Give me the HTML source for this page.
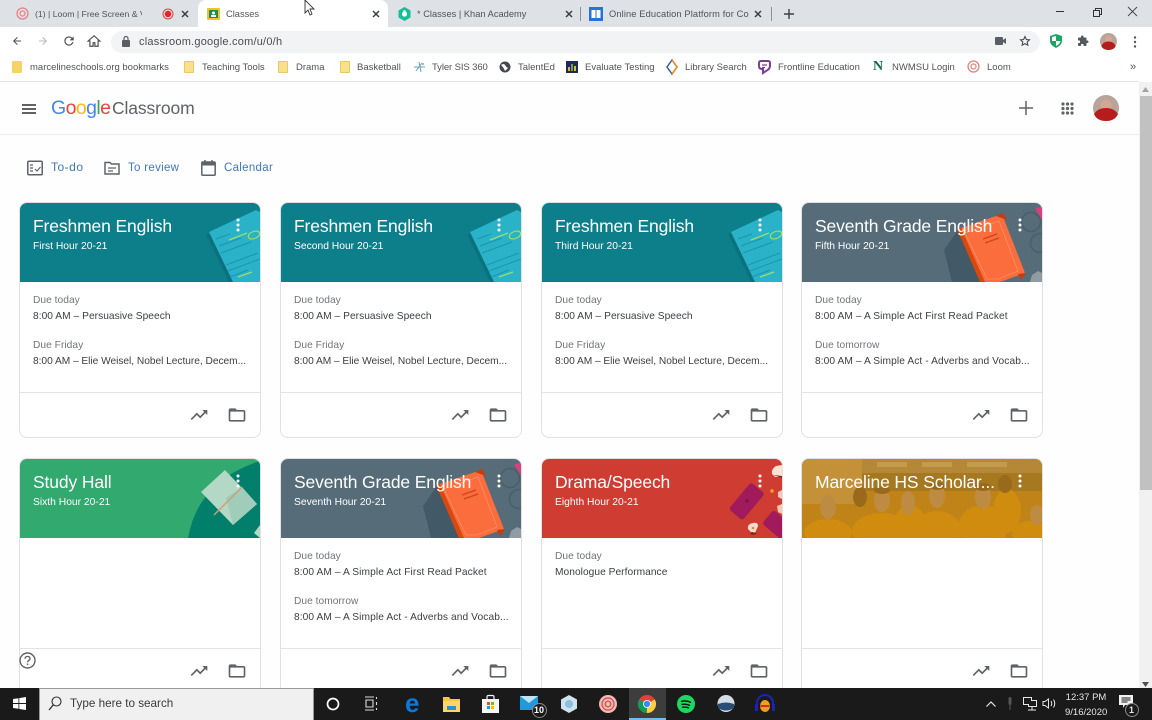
<!DOCTYPE html>
<html><head><meta charset="utf-8"><title>Classes</title>
<style>
*{box-sizing:border-box}
html,body{margin:0;padding:0;width:1152px;height:720px;overflow:hidden;background:#fefefe;font-family:"Liberation Sans",sans-serif}
.a{position:absolute;white-space:nowrap}
svg{position:absolute;overflow:visible}
.tabt{font-size:9.3px;color:#505357;top:8px;line-height:13px}
.bm{font-size:9.5px;color:#505357;top:61px;line-height:13px}
.card{position:absolute;width:242px;height:236px;border:1px solid #dfe1e5;border-radius:8px;background:#fff;overflow:hidden}
.hd{position:absolute;left:0;top:0;width:240px;height:79px;overflow:hidden}
.hd svg{left:0;top:0}
.t{position:absolute;left:13px;top:11px;font-size:17.5px;line-height:24px;color:#fff;white-space:nowrap;letter-spacing:-.13px}
.s{position:absolute;left:13px;top:37px;font-size:10.3px;line-height:14px;color:#fff;white-space:nowrap}
.l{position:absolute;left:13px;font-size:10.2px;line-height:14px;white-space:nowrap;color:#3c4043;letter-spacing:.04px}
.g{color:#70757a}
.k{letter-spacing:-.03px}
.v{letter-spacing:.09px}
.r{position:absolute;left:0;top:189px;width:240px;height:1px;background:#e3e3e3}
.lnk{position:absolute;top:161px;font-size:11.5px;line-height:15px;color:#3f78c4;white-space:nowrap;letter-spacing:.3px}
</style></head><body>

<svg width="0" height="0" style="position:absolute;left:0;top:0">
<defs>
<symbol id="trend" viewBox="0 0 24 24"><path d="M16 6l2.290 2.290-4.880 4.880-4-4L2 16.590 3.410 18l6-6 4 4 6.300-6.290L22 12V6z" fill="#5f6368"/></symbol>
<symbol id="folder" viewBox="0 0 24 24"><path d="M20 6h-8l-2-2H4c-1.100 0-2 .9-2 2v12c0 1.100.9 2 2 2h16c1.100 0 2-.9 2-2V8c0-1.100-.9-2-2-2zm0 12H4V8h16v10z" fill="#5f6368"/></symbol>
<symbol id="keb" viewBox="0 0 6 18"><circle cx="3" cy="4" r="1.500" fill="#fff"/><circle cx="3" cy="9" r="1.500" fill="#fff"/><circle cx="3" cy="14" r="1.500" fill="#fff"/></symbol>
<symbol id="teal" viewBox="0 0 240 79">
<rect width="240" height="79" fill="#0d7f8a"/>
<polygon points="186,31 192,30 218,79 209,79" fill="#0b727d"/>
<polygon points="189,29 236,7 240,9 240,79 213,79" fill="#2ab3c8"/>
<g stroke="#1a94ac" stroke-width="1" fill="none">
<path d="M196 36l14-5M199 43l22-8M201 50l30-11M206 62l32-12M208 68l32-12M210 74l18-7"/></g>
<path d="M209 37l18-7M218 74l14-5" stroke="#9ddc72" stroke-width="1.300" fill="none"/>
<ellipse cx="234" cy="32" rx="6" ry="3.500" fill="none" stroke="#9ddc72" stroke-width="1.200" transform="rotate(-22 234 32)"/>
</symbol>
<symbol id="gray" viewBox="0 0 240 79">
<rect width="240" height="79" fill="#566d79"/>
<circle cx="229" cy="19" r="9.500" fill="none" stroke="#47606c" stroke-width="1.500"/>
<circle cx="238" cy="40" r="9.500" fill="none" stroke="#47606c" stroke-width="1.500"/>
<polygon points="233,5 240,4 240,17" fill="#d8407e"/>
<polygon points="142,47 156,27 180,79 150,79" fill="#425a67"/>
<polygon points="230,72 236,68 240,70 240,79 228,79" fill="#8f9ca3"/>
<polygon points="155,26 160,24 184,79 178,79" fill="#d9480f"/>
<polygon points="159,25 200,11 223,70 198,79 183,79" fill="#fb6d3c"/>
<polygon points="163,30 197,18 216,68 196,76 185,76" fill="none" stroke="#fd9c78" stroke-width=".6"/>
<path d="M181 36l14-5M183 40l14-5" stroke="#c9461b" stroke-width="1.200"/>
<polygon points="194,13 201,10 205,17" fill="#c93a0e"/>
<polygon points="216,71 224,70 219,77" fill="#c93a0e"/>
</symbol>
<symbol id="green" viewBox="0 0 240 79">
<rect width="240" height="79" fill="#31a96f"/>
<path d="M168 79Q178 22 240 2V79Z" fill="#017f6a"/>
<polygon points="205,11 181,33 213,66 237,45" fill="#b4d8c6"/>
<polygon points="206,39 213,66 237,45 222,28" fill="#9fcdb9"/>
<path d="M222 28l-28 28" stroke="#d99a76" stroke-width="1.400"/>
<polygon points="240,66 234,74 240,79" fill="#b4d8c6"/>
</symbol>
<symbol id="red" viewBox="0 0 240 79">
<rect width="240" height="79" fill="#cf3c31"/>
<rect x="196" y="25" width="18" height="35" rx="3" fill="#a01a5c" transform="rotate(40 205 42)"/>
<circle cx="205" cy="42" r="1.800" fill="#7d1447"/>
<rect x="229" y="52" width="18" height="32" rx="3" fill="#a01a5c" transform="rotate(-50 238 68)"/>
<path d="M230 15q-1-5 4-8l6-1v12l-7 0z" fill="#fbe3d6"/>
<path d="M231 16l9 3v-2z" fill="#8a241d"/>
<path d="M206 70q-1-5 5-6 5-1 5 3l-3 7-4-1z" fill="#f9dccf"/><circle cx="211" cy="69" r="1.300" fill="#d98a3a"/>
<path d="M208 75q4 2 7-1l-5-1z" fill="#8a241d"/>
<circle cx="230" cy="32" r="1.700" fill="#f5a623"/>
<path d="M236 33l4-2v9l-4-2z" fill="#f7c9b8"/>
<path d="M235 47l5-2v10l-4-2z" fill="#f7c9b8"/>
</symbol>
<symbol id="photo" viewBox="0 0 240 79">
<rect width="240" height="79" fill="#bf8317"/>
<rect x="0" y="0" width="60" height="45" fill="#c49038"/>
<rect x="60" y="0" width="180" height="14" fill="#b48836"/>
<rect x="75" y="3" width="30" height="5" fill="#c49a4c"/><rect x="120" y="3" width="30" height="5" fill="#c49a4c"/><rect x="165" y="3" width="40" height="5" fill="#c49a4c"/>
<rect x="60" y="14" width="180" height="18" fill="#a67820"/>
<g fill="#d08c0e">
<ellipse cx="26" cy="74" rx="24" ry="14"/><ellipse cx="80" cy="72" rx="30" ry="18"/><ellipse cx="135" cy="72" rx="24" ry="20"/><ellipse cx="181" cy="68" rx="25" ry="22"/><ellipse cx="228" cy="74" rx="18" ry="12"/><ellipse cx="108" cy="66" rx="16" ry="20"/><ellipse cx="205" cy="52" rx="14" ry="22"/></g>
<g fill="#bd8c42">
<ellipse cx="26" cy="48" rx="8" ry="12"/><ellipse cx="80" cy="41" rx="8" ry="12"/><ellipse cx="106" cy="44" rx="7" ry="12"/><ellipse cx="135" cy="37" rx="8" ry="12"/><ellipse cx="181" cy="38" rx="8" ry="12"/><ellipse cx="235" cy="56" rx="7" ry="10"/></g>
<g fill="#9a6a1c">
<ellipse cx="58" cy="38" rx="7" ry="10"/><ellipse cx="203" cy="25" rx="7" ry="9"/><ellipse cx="80" cy="31" rx="8" ry="4"/><ellipse cx="135" cy="27" rx="8" ry="4"/><ellipse cx="181" cy="28" rx="8" ry="4"/></g>
</symbol>
</defs></svg>

<!-- tab strip -->
<div class="a" style="left:0;top:0;width:1152px;height:27px;background:#dee1e6"></div>
<div class="a" style="left:198px;top:0;width:190px;height:28px;background:#fff;border-radius:8px 8px 0 0"></div>
<svg style="left:16px;top:7px" width="13" height="13" viewBox="0 0 13 13"><circle cx="6.500" cy="6.500" r="5.500" fill="none" stroke="#e8837f" stroke-width="1.300"/><circle cx="6.500" cy="6.500" r="2.500" fill="none" stroke="#e8837f" stroke-width="1.200"/></svg>
<div class="a tabt" style="left:35px;width:107px;overflow:hidden;font-size:8.7px">(1) | Loom | Free Screen &amp; Vi</div>
<svg style="left:162px;top:8px" width="12" height="12" viewBox="0 0 12 12"><circle cx="6" cy="6" r="5" fill="none" stroke="#e0433a" stroke-width="1"/><circle cx="6" cy="6" r="3.200" fill="#e0262a"/></svg>
<svg style="left:181px;top:10px" width="8" height="8" viewBox="0 0 8 8"><path d="M1 1l6 6M7 1L1 7" stroke="#3c4043" stroke-width="1.500"/></svg>
<svg style="left:207px;top:8px" width="13" height="12" viewBox="0 0 13 12"><rect width="13" height="12" rx="1" fill="#f5c02e"/><rect x="2" y="2" width="9" height="8" fill="#1f8e4c"/><circle cx="6.500" cy="5" r="1.500" fill="#fff"/><rect x="4" y="7" width="5" height="2" fill="#fff"/></svg>
<div class="a tabt" style="left:226px">Classes</div>
<svg style="left:372px;top:10px" width="8" height="8" viewBox="0 0 8 8"><path d="M1 1l6 6M7 1L1 7" stroke="#3c4043" stroke-width="1.500"/></svg>
<svg style="left:398px;top:7px" width="13" height="14" viewBox="0 0 13 14"><polygon points="6.500,0 12.500,3.500 12.500,10.500 6.500,14 .5,10.500 .5,3.500" fill="#14bf96"/><circle cx="6.500" cy="7" r="2.600" fill="#fff"/><circle cx="6.500" cy="4.300" r="1.200" fill="#fff"/></svg>
<div class="a tabt" style="left:417px">* Classes | Khan Academy</div>
<svg style="left:565px;top:10px" width="8" height="8" viewBox="0 0 8 8"><path d="M1 1l6 6M7 1L1 7" stroke="#3c4043" stroke-width="1.500"/></svg>
<div class="a" style="left:580px;top:7px;width:1px;height:14px;background:#8f9296"></div>
<svg style="left:589px;top:7px" width="14" height="14" viewBox="0 0 14 14"><rect width="14" height="14" fill="#1f78d8"/><rect x="2.500" y="3" width="4" height="8" fill="#fff"/><rect x="7.500" y="3" width="4" height="8" fill="#fff"/></svg>
<div class="a tabt" style="left:609px;width:141px;overflow:hidden;letter-spacing:.12px">Online Education Platform for Co</div>
<svg style="left:754px;top:10px" width="8" height="8" viewBox="0 0 8 8"><path d="M1 1l6 6M7 1L1 7" stroke="#3c4043" stroke-width="1.500"/></svg>
<div class="a" style="left:771px;top:7px;width:1px;height:14px;background:#8f9296"></div>
<svg style="left:784px;top:9px" width="10" height="10" viewBox="0 0 10 10"><path d="M5 0v10M0 5h10" stroke="#3c4043" stroke-width="1.400"/></svg>
<div class="a" style="left:1056px;top:11px;width:8px;height:1px;background:#333"></div>
<svg style="left:1093px;top:8px" width="9" height="9" viewBox="0 0 9 9"><path d="M.5 2.500h6v6h-6zM2.500 2.500v-2h6v6h-2" fill="none" stroke="#333"/></svg>
<svg style="left:1128px;top:7px" width="9" height="9" viewBox="0 0 9 9"><path d="M0 0l9 9M9 0L0 9" stroke="#444" stroke-width=".9"/></svg>
<!-- cursor -->
<svg style="left:304px;top:0;z-index:5" width="11" height="17" viewBox="0 0 11 17"><path d="M1 0v13l3-3 2 5 2-1-2-5h4z" fill="#fff" stroke="#333" stroke-width=".9"/></svg>

<!-- toolbar -->
<div class="a" style="left:0;top:27px;width:1152px;height:54px;background:#fff"></div>
<div class="a" style="left:111px;top:31px;width:929px;height:22px;border-radius:11px;background:#f1f3f4"></div>
<svg style="left:11px;top:35px" width="12" height="12" viewBox="0 0 24 24"><path d="M20 11H7.830l5.590-5.590L12 4l-8 8 8 8 1.410-1.410L7.830 13H20v-2z" fill="#4a4d51"/></svg>
<svg style="left:37px;top:35px" width="12" height="12" viewBox="0 0 24 24"><path d="M4 11h12.170l-5.590-5.590L12 4l8 8-8 8-1.410-1.410L16.170 13H4v-2z" fill="#b4b7bb"/></svg>
<svg style="left:62px;top:34px" width="14" height="14" viewBox="0 0 24 24"><path d="M17.650 6.350A7.960 7.960 0 0 0 12 4a8 8 0 1 0 7.730 10h-2.080A6 6 0 1 1 12 6c1.660 0 3.140.69 4.220 1.780L13 11h7V4l-2.350 2.350z" fill="#4a4d51"/></svg>
<svg style="left:87px;top:34px" width="14" height="14" viewBox="0 0 24 24"><path d="M12 3L2 12h3v9h5.500v-6h3v6H19v-9h3z" fill="none" stroke="#4a4d51" stroke-width="2"/></svg>
<svg style="left:122px;top:36px" width="8" height="11" viewBox="0 0 8 11"><rect y="4" width="8" height="7" rx="1" fill="#5a5d61"/><path d="M2 4V2.500a2 2 0 0 1 4 0V4" fill="none" stroke="#5a5d61" stroke-width="1.200"/></svg>
<div class="a" style="left:139px;top:35px;font-size:11px;line-height:15px;color:#4a4d51;letter-spacing:.22px">classroom.google.com/u/0/h</div>
<svg style="left:995px;top:37px" width="11" height="8" viewBox="0 0 11 8"><rect width="8" height="8" rx="1" fill="#5a5d61"/><path d="M8 3l3-2v6L8 5z" fill="#5a5d61"/></svg>
<svg style="left:1019px;top:35px" width="12" height="12" viewBox="0 0 24 24"><path d="M12 3l2.800 6 6.200.7-4.600 4.300 1.300 6.400L12 17.200l-5.700 3.200 1.300-6.400L3 9.700 9.200 9z" fill="none" stroke="#4a4d51" stroke-width="2.200"/></svg>
<svg style="left:1050px;top:34px" width="12" height="14" viewBox="0 0 12 14"><path d="M6 0l6 2v5q0 4-6 7-6-3-6-7V2z" fill="#1fa463"/><path d="M6 2v5H2V3zM6 7h4.500q-.5 3-4.500 5z" fill="#fff"/></svg>
<svg style="left:1077px;top:35px" width="12" height="12" viewBox="0 0 24 24"><path d="M20.500 11H19V7a2 2 0 0 0-2-2h-4V3.500a2.500 2.500 0 0 0-5 0V5H4a2 2 0 0 0-2 2v3.800h1.500a2.700 2.700 0 0 1 0 5.400H2V20a2 2 0 0 0 2 2h3.800v-1.500a2.700 2.700 0 0 1 5.400 0V22H17a2 2 0 0 0 2-2v-4h1.500a2.500 2.500 0 0 0 0-5z" fill="#55585c"/></svg>
<svg style="left:1100px;top:33px" width="17" height="17" viewBox="0 0 26 26"><circle cx="13" cy="13" r="13" fill="#b8a498"/><circle cx="13" cy="10" r="5.500" fill="#d2a795"/><path d="M2 20q3-7 11-7t11 7q-3 6-11 6T2 20z" fill="#b71c1c"/></svg>
<svg style="left:1133px;top:36px" width="4" height="12" viewBox="0 0 4 12"><circle cx="2" cy="1.500" r="1.200" fill="#55585c"/><circle cx="2" cy="6" r="1.200" fill="#55585c"/><circle cx="2" cy="10.500" r="1.200" fill="#55585c"/></svg>

<!-- bookmarks -->
<div class="a" style="left:12px;top:61px;width:10px;height:12px;background:#f6d365;border-radius:1px"></div>
<div class="a bm" style="left:30px">marcelineschools.org bookmarks</div>
<div class="a" style="left:184px;top:61px;width:10px;height:12px;background:#fbe08c;border:1px solid #e6c869;border-radius:1px"></div>
<div class="a bm" style="left:202px">Teaching Tools</div>
<div class="a" style="left:278px;top:61px;width:10px;height:12px;background:#fbe08c;border:1px solid #e6c869;border-radius:1px"></div>
<div class="a bm" style="left:296px">Drama</div>
<div class="a" style="left:340px;top:61px;width:10px;height:12px;background:#fbe08c;border:1px solid #e6c869;border-radius:1px"></div>
<div class="a bm" style="left:357px">Basketball</div>
<svg style="left:413px;top:61px" width="13" height="12" viewBox="0 0 13 12"><path d="M1 6h11M6 1l2 10M3 10l6-8" stroke="#6b9fc4" stroke-width="1"/><circle cx="10" cy="3" r="1" fill="#8dbb55"/></svg>
<div class="a bm" style="left:432px;letter-spacing:-.1px">Tyler SIS 360</div>
<svg style="left:499px;top:61px" width="12" height="12" viewBox="0 0 12 12"><circle cx="6" cy="6" r="5.500" fill="#45484c"/><path d="M2 4q3-2 4 0t3 3l-3 3q-1-3-4-6z" fill="#fff"/></svg>
<div class="a bm" style="left:518px">TalentEd</div>
<svg style="left:566px;top:61px" width="12" height="12" viewBox="0 0 12 12"><rect width="12" height="12" fill="#1c2a55"/><rect x="2" y="6" width="2" height="4" fill="#e8b23a"/><rect x="5" y="3" width="2" height="7" fill="#5ea85e"/><rect x="8" y="5" width="2" height="5" fill="#e8b23a"/></svg>
<div class="a bm" style="left:585px">Evaluate Testing</div>
<svg style="left:667px;top:60px" width="10" height="14" viewBox="0 0 10 14"><path d="M5 0L0 7l5 7 5-7z" fill="none" stroke="#2d5ea8" stroke-width="1.500"/><path d="M5 0l5 7-5 7" fill="none" stroke="#ef8f1d" stroke-width="1.500"/></svg>
<div class="a bm" style="left:685px">Library Search</div>
<svg style="left:758px;top:60px" width="13" height="14" viewBox="0 0 13 14"><path d="M1 3q0-2 2-2h7q2 0 2 2v3q0 3-4 5l-3 2V9H4Q1 9 1 6z" fill="none" stroke="#7b3f98" stroke-width="2"/><path d="M4 5h5M4 7.500h3" stroke="#7b3f98" stroke-width="1.200"/></svg>
<div class="a bm" style="left:778px">Frontline Education</div>
<div class="a" style="left:873px;top:60px;font-size:14px;line-height:14px;font-weight:bold;color:#0d6b45;font-family:'Liberation Serif',serif">N</div>
<div class="a bm" style="left:892px">NWMSU Login</div>
<svg style="left:967px;top:60px" width="13" height="13" viewBox="0 0 13 13"><circle cx="6.500" cy="6.500" r="5.500" fill="none" stroke="#e8837f" stroke-width="1.300"/><circle cx="6.500" cy="6.500" r="2.500" fill="none" stroke="#e8837f" stroke-width="1.200"/></svg>
<div class="a bm" style="left:987px">Loom</div>
<div class="a" style="left:1130px;top:60px;font-size:11px;line-height:14px;color:#55585c">»</div>
<div class="a" style="left:0;top:81px;width:1139px;height:1px;background:#e6e6e6"></div>

<!-- classroom header -->
<div class="a" style="left:22px;top:104px;width:14px;height:2px;background:#5f6368;box-shadow:0 4px 0 #5f6368,0 8px 0 #5f6368"></div>
<div class="a" style="left:51px;top:96px;font-size:19.500px;line-height:25px;letter-spacing:-.6px"><span style="color:#4285f4">G</span><span style="color:#ea4335">o</span><span style="color:#fbbc05">o</span><span style="color:#4285f4">g</span><span style="color:#34a853">l</span><span style="color:#ea4335">e</span></div>
<div class="a" style="left:112px;top:96px;font-size:17.500px;line-height:24px;color:#5f6368;letter-spacing:-.12px">Classroom</div>
<svg style="left:1019px;top:101px" width="14" height="14" viewBox="0 0 14 14"><path d="M7 0v14M0 7h14" stroke="#5f6368" stroke-width="1.500"/></svg>
<svg style="left:1061px;top:102px" width="13" height="13" viewBox="0 0 13 13" fill="#5f6368"><circle cx="2" cy="2" r="1.600"/><circle cx="6.500" cy="2" r="1.600"/><circle cx="11" cy="2" r="1.600"/><circle cx="2" cy="6.500" r="1.600"/><circle cx="6.500" cy="6.500" r="1.600"/><circle cx="11" cy="6.500" r="1.600"/><circle cx="2" cy="11" r="1.600"/><circle cx="6.500" cy="11" r="1.600"/><circle cx="11" cy="11" r="1.600"/></svg>
<svg style="left:1093px;top:95px" width="26" height="26" viewBox="0 0 26 26"><circle cx="13" cy="13" r="13" fill="#b8a498"/><circle cx="13" cy="10" r="5.500" fill="#d2a795"/><path d="M1 19q4-6 12-6t12 6q-3 7-12 7T1 19z" fill="#b71c1c"/></svg>
<div class="a" style="left:0;top:134px;width:1139px;height:1px;background:#ececec"></div>

<!-- nav links -->
<svg style="left:27px;top:160px" width="16" height="16" viewBox="0 0 16 16"><rect x=".8" y="1.200" width="14.400" height="13.600" rx="1" fill="none" stroke="#5f6368" stroke-width="1.500"/><path d="M3 5h3M3 8h3M3 11h3M8 9l2 2 3.500-4" fill="none" stroke="#5f6368" stroke-width="1.200"/></svg>
<div class="lnk" style="left:51px;top:160px;font-size:12px;letter-spacing:.5px">To-do</div>
<svg style="left:104px;top:161px" width="16" height="14" viewBox="0 0 16 14"><path d="M1 1.500h5l1.500 1.500H15v10H1z" fill="none" stroke="#5f6368" stroke-width="1.500"/><path d="M4 7h8M4 10h5" stroke="#5f6368" stroke-width="1.200"/></svg>
<div class="lnk" style="left:128px">To review</div>
<svg style="left:201px;top:160px" width="15" height="16" viewBox="0 0 15 16"><rect x=".8" y="2" width="13.400" height="13.200" rx="1" fill="none" stroke="#5f6368" stroke-width="1.500"/><rect x="1" y="2" width="13" height="3.500" fill="#5f6368"/><path d="M4 0v3M11 0v3" stroke="#5f6368" stroke-width="1.500"/></svg>
<div class="lnk" style="left:224px">Calendar</div>

<!-- row 1 -->
<div class="card" style="left:19px;top:202px">
<div class="hd"><svg width="240" height="79"><use href="#teal"/></svg></div>
<div class="t">Freshmen English</div><div class="s">First Hour 20-21</div>
<svg style="left:215px;top:13px" width="6" height="18"><use href="#keb"/></svg>
<div class="l g" style="top:91px">Due today</div><div class="l" style="top:107px">8:00 AM – Persuasive Speech</div>
<div class="l g" style="top:136px">Due Friday</div><div class="l k" style="top:152px">8:00 AM – Elie Weisel, Nobel Lecture, Decem...</div>
<div class="r"></div>
<svg style="left:169px;top:202px" width="20" height="20"><use href="#trend"/></svg>
<svg style="left:207px;top:202px" width="20" height="20"><use href="#folder"/></svg>
</div>

<div class="card" style="left:280px;top:202px">
<div class="hd"><svg width="240" height="79"><use href="#teal"/></svg></div>
<div class="t">Freshmen English</div><div class="s">Second Hour 20-21</div>
<svg style="left:215px;top:13px" width="6" height="18"><use href="#keb"/></svg>
<div class="l g" style="top:91px">Due today</div><div class="l" style="top:107px">8:00 AM – Persuasive Speech</div>
<div class="l g" style="top:136px">Due Friday</div><div class="l k" style="top:152px">8:00 AM – Elie Weisel, Nobel Lecture, Decem...</div>
<div class="r"></div>
<svg style="left:169px;top:202px" width="20" height="20"><use href="#trend"/></svg>
<svg style="left:207px;top:202px" width="20" height="20"><use href="#folder"/></svg>
</div>

<div class="card" style="left:541px;top:202px">
<div class="hd"><svg width="240" height="79"><use href="#teal"/></svg></div>
<div class="t">Freshmen English</div><div class="s">Third Hour 20-21</div>
<svg style="left:215px;top:13px" width="6" height="18"><use href="#keb"/></svg>
<div class="l g" style="top:91px">Due today</div><div class="l" style="top:107px">8:00 AM – Persuasive Speech</div>
<div class="l g" style="top:136px">Due Friday</div><div class="l k" style="top:152px">8:00 AM – Elie Weisel, Nobel Lecture, Decem...</div>
<div class="r"></div>
<svg style="left:169px;top:202px" width="20" height="20"><use href="#trend"/></svg>
<svg style="left:207px;top:202px" width="20" height="20"><use href="#folder"/></svg>
</div>

<div class="card" style="left:801px;top:202px">
<div class="hd"><svg width="240" height="79"><use href="#gray"/></svg></div>
<div class="t">Seventh Grade English</div><div class="s">Fifth Hour 20-21</div>
<svg style="left:215px;top:13px" width="6" height="18"><use href="#keb"/></svg>
<div class="l g" style="top:91px">Due today</div><div class="l v" style="top:107px">8:00 AM – A Simple Act First Read Packet</div>
<div class="l g" style="top:136px">Due tomorrow</div><div class="l v" style="top:152px">8:00 AM – A Simple Act - Adverbs and Vocab...</div>
<div class="r"></div>
<svg style="left:169px;top:202px" width="20" height="20"><use href="#trend"/></svg>
<svg style="left:207px;top:202px" width="20" height="20"><use href="#folder"/></svg>
</div>

<!-- row 2 -->
<div class="card" style="left:19px;top:458px">
<div class="hd"><svg width="240" height="79"><use href="#green"/></svg></div>
<div class="t">Study Hall</div><div class="s">Sixth Hour 20-21</div>
<svg style="left:215px;top:13px" width="6" height="18"><use href="#keb"/></svg>
<div class="r"></div>
<svg style="left:169px;top:202px" width="20" height="20"><use href="#trend"/></svg>
<svg style="left:207px;top:202px" width="20" height="20"><use href="#folder"/></svg>
</div>

<div class="card" style="left:280px;top:458px">
<div class="hd"><svg width="240" height="79"><use href="#gray"/></svg></div>
<div class="t">Seventh Grade English</div><div class="s">Seventh Hour 20-21</div>
<svg style="left:215px;top:13px" width="6" height="18"><use href="#keb"/></svg>
<div class="l g" style="top:91px">Due today</div><div class="l v" style="top:107px">8:00 AM – A Simple Act First Read Packet</div>
<div class="l g" style="top:136px">Due tomorrow</div><div class="l v" style="top:152px">8:00 AM – A Simple Act - Adverbs and Vocab...</div>
<div class="r"></div>
<svg style="left:169px;top:202px" width="20" height="20"><use href="#trend"/></svg>
<svg style="left:207px;top:202px" width="20" height="20"><use href="#folder"/></svg>
</div>

<div class="card" style="left:541px;top:458px">
<div class="hd"><svg width="240" height="79"><use href="#red"/></svg></div>
<div class="t">Drama/Speech</div><div class="s">Eighth Hour 20-21</div>
<svg style="left:215px;top:13px" width="6" height="18"><use href="#keb"/></svg>
<div class="l g" style="top:91px">Due today</div><div class="l" style="top:107px">Monologue Performance</div>
<div class="r"></div>
<svg style="left:169px;top:202px" width="20" height="20"><use href="#trend"/></svg>
<svg style="left:207px;top:202px" width="20" height="20"><use href="#folder"/></svg>
</div>

<div class="card" style="left:801px;top:458px">
<div class="hd"><svg width="240" height="79"><use href="#photo"/></svg></div>
<div class="t">Marceline HS Scholar...</div>
<svg style="left:215px;top:13px" width="6" height="18"><use href="#keb"/></svg>
<div class="r"></div>
<svg style="left:169px;top:202px" width="20" height="20"><use href="#trend"/></svg>
<svg style="left:207px;top:202px" width="20" height="20"><use href="#folder"/></svg>
</div>

<!-- help -->
<svg style="left:19px;top:652px" width="17" height="17" viewBox="0 0 17 17"><circle cx="8.500" cy="8.500" r="7.500" fill="#fff" stroke="#5f6368" stroke-width="1.400"/><path d="M6 6.800q0-2.300 2.500-2.300T11 6.500q0 1.300-1.300 2-1.100.6-1.100 1.800" fill="none" stroke="#5f6368" stroke-width="1.300"/><rect x="7.800" y="11.500" width="1.500" height="1.500" fill="#5f6368"/></svg>

<!-- scrollbar -->
<div class="a" style="left:1139px;top:82px;width:13px;height:606px;background:#f1f1f1"></div>
<div class="a" style="left:1140px;top:96px;width:12px;height:394px;background:#c1c1c1"></div>
<svg style="left:1142px;top:87px" width="7" height="5" viewBox="0 0 7 5"><path d="M3.500 0L7 5H0z" fill="#a3a3a3"/></svg>
<svg style="left:1142px;top:682px" width="7" height="5" viewBox="0 0 7 5"><path d="M0 0h7L3.500 5z" fill="#505050"/></svg>

<!-- taskbar -->
<div class="a" style="left:0;top:688px;width:1152px;height:32px;background:#1a1a1a;z-index:3"></div>
<div style="position:absolute;left:0;top:688px;width:1152px;height:32px;z-index:4">
<svg style="left:13px;top:9px" width="13" height="13" viewBox="0 0 13 13"><path d="M0 2l5.500-.8V6H0zM6.300 1.100L13 0v6H6.300zM0 7h5.500v4.800L0 11zM6.300 7H13v6l-6.700-1z" fill="#fff"/></svg>
<div class="a" style="left:39px;top:0;width:275px;height:32px;background:#f0f0f0;border:1px solid #9a9a9a;border-bottom:none"></div>
<svg style="left:48px;top:8px" width="14" height="15" viewBox="0 0 14 15"><circle cx="8.500" cy="5.500" r="4.500" fill="none" stroke="#333" stroke-width="1.100"/><path d="M5.300 8.800L1 14" stroke="#333" stroke-width="1.300"/></svg>
<div class="a" style="left:70px;top:8px;font-size:11.700px;line-height:16px;color:#3a3a3a">Type here to search</div>
<svg style="left:326px;top:9px" width="14" height="14" viewBox="0 0 14 14"><circle cx="7" cy="7" r="5.500" fill="none" stroke="#fff" stroke-width="1.700"/></svg>
<svg style="left:364px;top:8px" width="14" height="15" viewBox="0 0 14 15"><path d="M1 1h9M1 14h9M2 4h7v7H2zM12.500 1v2M12.500 6v3M12.500 12v2" fill="none" stroke="#dcdcdc" stroke-width="1.100"/></svg>
<div class="a" style="left:405px;top:1px;font-size:26px;line-height:28px;font-weight:bold;color:#0f78d4">e</div>
<svg style="left:443px;top:8px" width="17" height="16" viewBox="0 0 17 16"><path d="M0 1h6l1.500 2H17v13H0z" fill="#f6c544"/><rect y="5" width="17" height="11" fill="#fcd667"/><rect x="4" y="10" width="9" height="4" fill="#2f8fd8"/></svg>
<svg style="left:482px;top:7px" width="17" height="18" viewBox="0 0 17 18"><rect y="4" width="17" height="14" fill="#f5f5f5"/><path d="M5 4V2q0-1.500 1.500-1.500h4Q12 .5 12 2v2" fill="none" stroke="#f5f5f5" stroke-width="1.200"/><rect x="5" y="7" width="3" height="3" fill="#e5512d"/><rect x="9" y="7" width="3" height="3" fill="#7cb82f"/><rect x="5" y="11" width="3" height="3" fill="#1e9bdc"/><rect x="9" y="11" width="3" height="3" fill="#fbb900"/></svg>
<svg style="left:520px;top:8px" width="18" height="14" viewBox="0 0 18 14"><rect width="18" height="14" fill="#1e9bdc"/><path d="M0 0l9 7 9-7z" fill="#bfe4f7"/></svg>
<svg style="left:532px;top:15px" width="15" height="15" viewBox="0 0 15 15"><circle cx="7.500" cy="7.500" r="7" fill="#1a1a1a" stroke="#888"/></svg>
<div class="a" style="left:534px;top:16px;font-size:9px;line-height:13px;color:#fff;font-weight:bold">10</div>
<svg style="left:561px;top:7px" width="16" height="18" viewBox="0 0 16 18"><polygon points="8,0 16,4.500 16,13.500 8,18 0,13.500 0,4.500" fill="#cfe3ee"/><circle cx="8" cy="9" r="4" fill="#8cc0da"/></svg>
<svg style="left:599px;top:7px" width="18" height="18" viewBox="0 0 18 18"><circle cx="9" cy="9" r="9" fill="#f6b9b4"/><circle cx="9" cy="9" r="6" fill="none" stroke="#c94b48" stroke-width="1.200"/><circle cx="9" cy="9" r="2.800" fill="none" stroke="#c94b48" stroke-width="1.200"/></svg>
<div class="a" style="left:629px;top:0;width:37px;height:32px;background:#3d3d3d"></div>
<div class="a" style="left:629px;top:30px;width:37px;height:2px;background:#76b9ed"></div>
<svg style="left:638px;top:7px" width="18" height="18" viewBox="0 0 18 18"><circle cx="9" cy="9" r="9" fill="#db4437"/><path d="M9 9L1.200 4.500A9 9 0 0 0 9 18z" fill="#0f9d58"/><path d="M9 9V18A9 9 0 0 0 16.800 4.500z" fill="#ffcd40"/><circle cx="9" cy="9" r="4" fill="#fff"/><circle cx="9" cy="9" r="3.200" fill="#4285f4"/></svg>
<svg style="left:677px;top:7px" width="18" height="18" viewBox="0 0 18 18"><circle cx="9" cy="9" r="9" fill="#1ed760"/><path d="M4 6.500q5-1.500 10 1M4.500 9.500q4.500-1 8.500 1M5 12.300q4-.8 7 .8" fill="none" stroke="#111" stroke-width="1.400"/></svg>
<svg style="left:717px;top:6px" width="18" height="19" viewBox="0 0 18 19"><circle cx="9" cy="9.500" r="8.500" fill="#d5dde4"/><path d="M1 10q8-3 16 0v4q-8 5-16 0z" fill="#2a4d78"/></svg>
<svg style="left:755px;top:6px" width="20" height="20" viewBox="0 0 20 20"><path d="M2 14V9a8 8 0 0 1 16 0v5" fill="none" stroke="#1b24b8" stroke-width="2"/><rect x="0" y="10" width="3" height="7" fill="#1b24b8"/><rect x="17" y="10" width="3" height="7" fill="#1b24b8"/><ellipse cx="10" cy="12" rx="5" ry="6" fill="#e8a123"/><rect x="5.500" y="11" width="9" height="2" fill="#d12b2b"/></svg>
<svg style="left:986px;top:13px" width="10" height="6" viewBox="0 0 10 6"><path d="M.5 5.500L5 1l4.500 4.500" fill="none" stroke="#e6e6e6" stroke-width="1.200"/></svg>
<svg style="left:1007px;top:9px" width="6" height="13" viewBox="0 0 6 13"><rect x="1.500" y="0" width="3" height="8" rx="1.500" fill="#555"/><path d="M3 8v5" stroke="#555"/></svg>
<svg style="left:1023px;top:9px" width="14" height="14" viewBox="0 0 14 14"><path d="M.5.500h8v3h5v6h-8v-2H.5zM9 9.500v3M5 13h8" fill="none" stroke="#e6e6e6"/></svg>
<svg style="left:1043px;top:9px" width="13" height="13" viewBox="0 0 13 13"><path d="M0 4.500h2L5.500 2v9L2 8.500H0z" fill="none" stroke="#e6e6e6"/><path d="M8 4q1.500 2.500 0 5M10.500 2.500q2.500 4 0 8" fill="none" stroke="#e6e6e6"/></svg>
<div class="a" style="left:1065px;top:2px;width:42px;text-align:center;font-size:9.500px;line-height:15px;color:#e6e6e6">12:37 PM<br>9/16/2020</div>
<svg style="left:1119px;top:7px" width="14" height="14" viewBox="0 0 14 14"><path d="M0 0h14v10H6l-2 3v-3H0z" fill="#f2f2f2"/><path d="M2.500 3h9M2.500 5h9M2.500 7h6" stroke="#1a1a1a"/></svg>
<svg style="left:1125px;top:15px" width="14" height="14" viewBox="0 0 14 14"><circle cx="7" cy="7" r="6.500" fill="#1a1a1a" stroke="#8a8a8a"/></svg>
<div class="a" style="left:1129px;top:16px;font-size:9px;line-height:12px;color:#e6e6e6;font-weight:bold">1</div>
</div>
</body></html>
